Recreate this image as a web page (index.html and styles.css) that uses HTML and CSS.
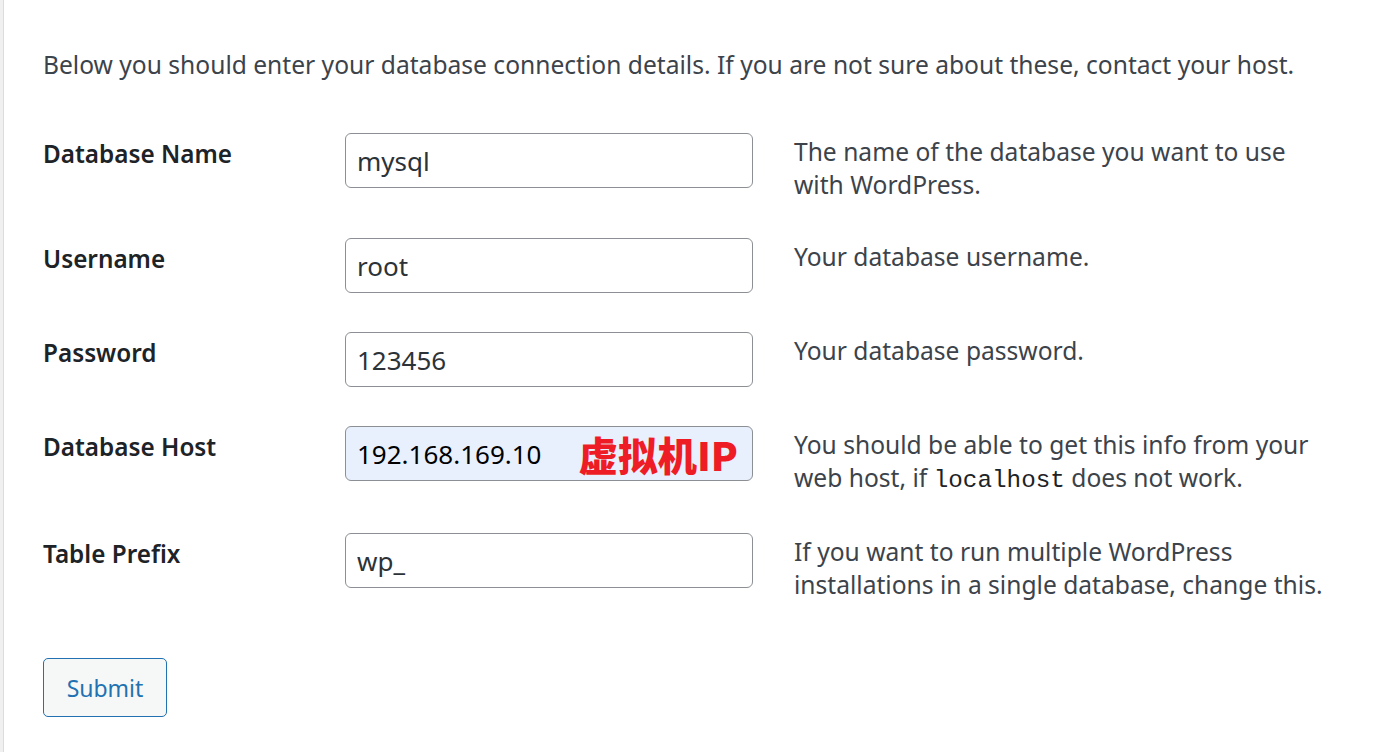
FILE: index.html
```html
<!DOCTYPE html>
<html lang="en">
<head>
<meta charset="utf-8">
<title>WordPress Setup</title>
<link rel="stylesheet" href="styles.css">
</head>
<body>
<div class="page">
  <form class="setup">
    <p class="intro">Below you should enter your database connection details. If you are not sure about these, contact your host.</p>
    <div class="form-table">
      <div class="row">
        <label class="label" for="dbname">Database Name</label>
        <div class="field"><input class="input" id="dbname" type="text" value="mysql"></div>
        <div class="desc">The name of the database you want to use<br>with WordPress.</div>
      </div>
      <div class="row">
        <label class="label" for="uname">Username</label>
        <div class="field"><input class="input" id="uname" type="text" value="root"></div>
        <div class="desc">Your database username.</div>
      </div>
      <div class="row">
        <label class="label" for="pwd">Password</label>
        <div class="field"><input class="input" id="pwd" type="text" value="123456"></div>
        <div class="desc">Your database password.</div>
      </div>
      <div class="row">
        <label class="label" for="dbhost">Database Host</label>
        <div class="field"><input class="input autofill" id="dbhost" type="text" value="192.168.169.10"><span class="note">虚拟机IP</span></div>
        <div class="desc desc-code">You should be able to get this info from your<br>web host, if <code>localhost</code> does not work.</div>
      </div>
      <div class="row">
        <label class="label" for="prefix">Table Prefix</label>
        <div class="field"><input class="input" id="prefix" type="text" value="wp_"></div>
        <div class="desc">If you want to run multiple WordPress<br>installations in a single database, change this.</div>
      </div>
    </div>
    <div class="actions"><button class="button" type="button">Submit</button></div>
  </form>
</div>
</body>
</html>
```
FILE: styles.css
```css
html, body {
  margin: 0;
  padding: 0;
  height: 100%;
}
body {
  background: #f0f0f1;
  font-family: "Noto Sans", "Open Sans", sans-serif;
  color: #3c434a;
}
.page {
  margin-left: 3px;
  min-height: 100%;
  background: #fff;
  border-left: 1px solid #dcdcde;
  padding: 0 0 0 39px;
  box-sizing: border-box;
  overflow: hidden;
}
.intro {
  margin: 0;
  padding-top: 48px;
  font-size: 24.6px;
  line-height: 34px;
  color: #3c434a;
}
.form-table {
  margin-top: 32px;
}
.row {
  display: grid;
  grid-template-columns: 302px 408px 1fr;
  align-items: start;
  padding: 19px 0 20px;
}
.label {
  font-weight: 600;
  font-size: 24.3px;
  line-height: 34px;
  color: #1d2327;
  padding-top: 4px;
}
.field {
  position: relative;
}
.input {
  display: block;
  box-sizing: border-box;
  width: 408px;
  height: 55px;
  margin: 0;
  padding: 0 11px;
  border: 1px solid #8c8f94;
  border-radius: 6px;
  background: #fff;
  font-family: "Noto Sans", "Open Sans", sans-serif;
  font-size: 26px;
  color: #2c3338;
  outline: none;
}
.input.autofill {
  background: #e8f0fe;
  color: #000;
}
.note {
  position: absolute;
  right: 15px;
  top: 4px;
  font-family: "Noto Sans CJK SC", sans-serif;
  font-weight: 900;
  font-size: 39.5px;
  line-height: 48px;
  color: #ee1c25;
}
.desc {
  margin-left: 41px;
  margin-bottom: -2px;
  font-size: 24.6px;
  line-height: 32.5px;
  padding-top: 3px;
  color: #3c434a;
}
.desc-code {
  padding-bottom: 2px;
}
.desc code {
  font-family: "Liberation Mono", "DejaVu Sans Mono", monospace;
  font-size: 24.3px;
  line-height: 1;
  color: #1d2327;
}
.actions {
  padding-top: 39px;
}
.button {
  box-sizing: border-box;
  width: 124px;
  height: 59px;
  padding: 0;
  border: 1px solid #2271b1;
  border-radius: 5px;
  background: #f6f7f7;
  color: #2271b1;
  font-family: "Noto Sans", "Open Sans", sans-serif;
  font-size: 23px;
  cursor: pointer;
}
```
